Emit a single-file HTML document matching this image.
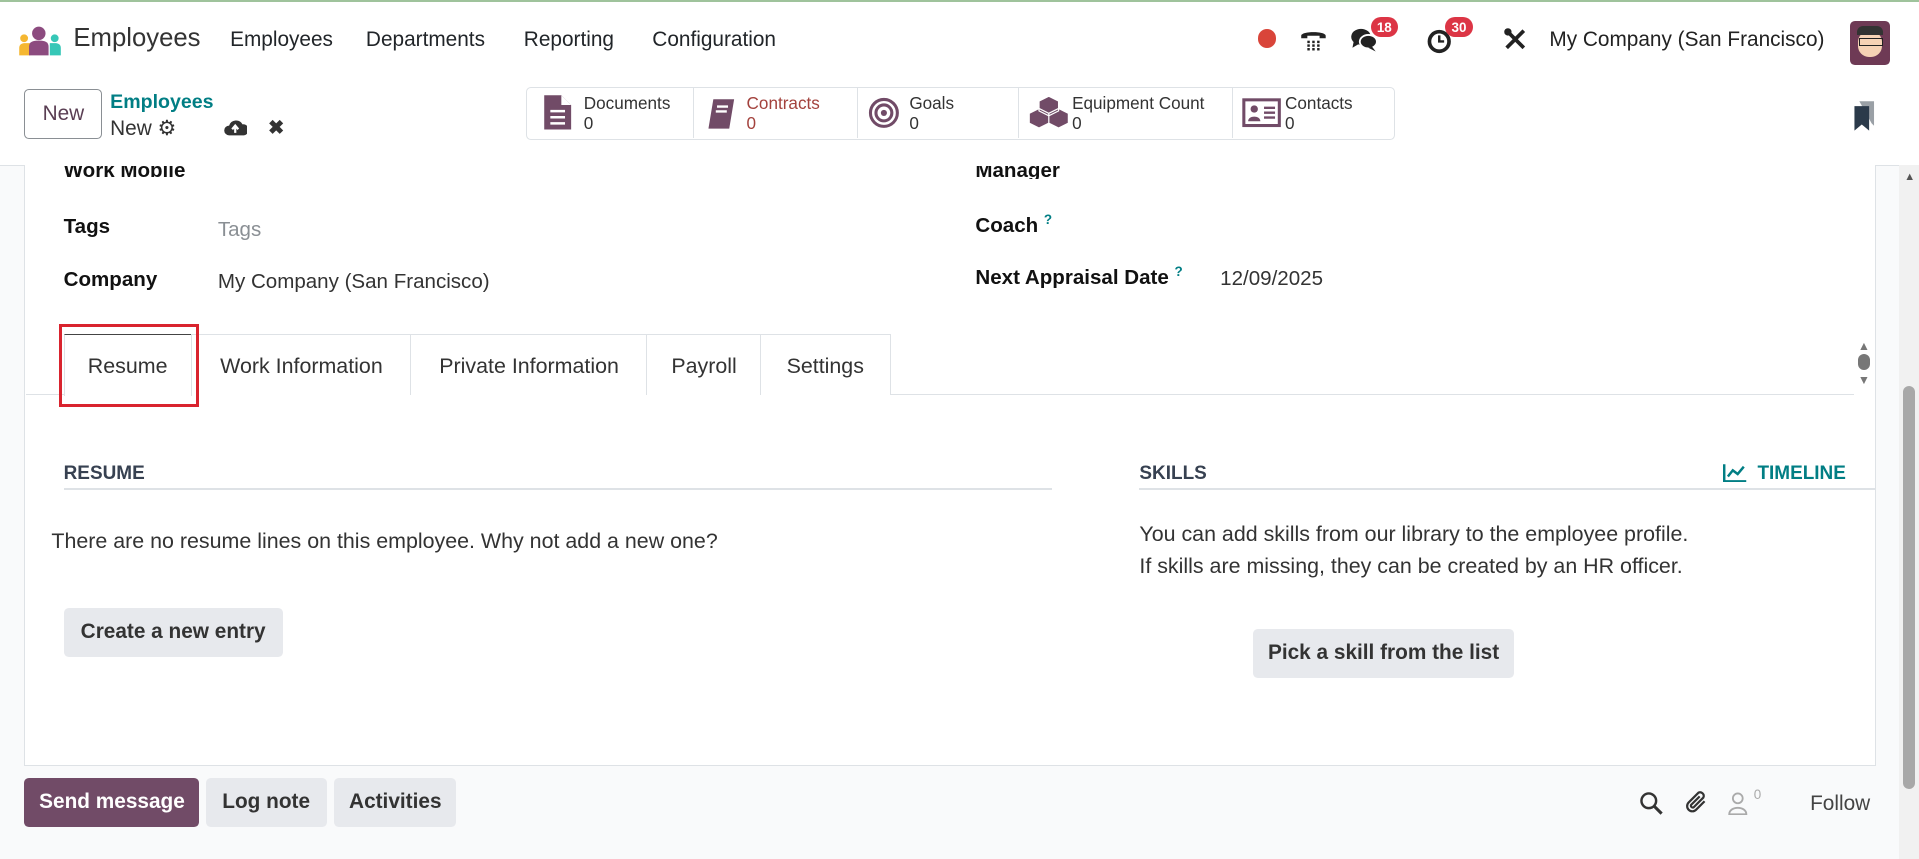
<!DOCTYPE html>
<html><head><meta charset="utf-8"><style>
html,body{margin:0;padding:0;}
html{width:1919px;height:859px;overflow:hidden;background:#f9fafb;}
body{zoom:1.22385;width:1568px;height:702px;position:relative;font-family:"Liberation Sans",sans-serif;color:#212529;background:#f9fafb;overflow:hidden;}
.a{position:absolute;white-space:nowrap;}
.top{position:absolute;left:0;top:0;width:1568px;height:2px;background:#9fc39c;}
.nav{position:absolute;left:0;top:2px;width:1568px;height:64px;background:#fff;}
.cp{position:absolute;left:0;top:66px;width:1568px;height:69px;background:#fff;border-bottom:1px solid #dee2e6;}
.sheet{position:absolute;left:20px;top:135px;width:1511px;height:490px;background:#fff;border:1px solid #dee2e6;border-top:none;}
.lbl{font-weight:bold;font-size:16.8px;color:#111;}
.val{font-size:16.8px;color:#333;}
.btn{position:absolute;background:#e7e9ed;border-radius:4px;font-size:17px;font-weight:bold;color:#333;text-align:center;}
.tab{position:absolute;top:273px;height:49px;border:1px solid #dee2e6;border-bottom:none;font-size:17.5px;color:#333;line-height:51px;text-align:center;background:#fff;}
.badge{position:absolute;background:#dc3545;color:#fff;font-size:11px;border-radius:9px;padding:2px 5px;font-weight:bold;}
.sb{position:absolute;top:71px;height:42px;border-left:1px solid #dee2e6;font-size:14px;color:#333;}
</style></head><body>
<div class="top"></div>
<div class="nav">
 <svg class="a" style="left:15px;top:19px" width="36" height="26" viewBox="0 0 36 26"><circle cx="17" cy="6" r="5.5" fill="#8c4b7f"/><circle cx="5" cy="10" r="3.2" fill="#f5b731"/><circle cx="30" cy="10" r="3.2" fill="#36c7b7"/><path d="M1 24v-6c0-3 2-4 5-4h4v10z" fill="#f5b731"/><path d="M26 24v-10h4c3 0 5 1 5 4v6z" fill="#36c7b7"/><path d="M9 24v-7c0-4 3-5 8-5s8 1 8 5v7z" fill="#8c4b7f"/></svg>
 <div class="a" style="left:60px;top:18px;font-size:21px;color:#333">Employees</div>
 <div class="a" style="left:188px;top:21px;font-size:17px">Employees</div>
 <div class="a" style="left:299px;top:21px;font-size:17px">Departments</div>
 <div class="a" style="left:428px;top:21px;font-size:17px">Reporting</div>
 <div class="a" style="left:533px;top:21px;font-size:17px">Configuration</div>
 <div class="a" style="left:1028px;top:22px;width:15px;height:15px;border-radius:50%;background:#d9453a"></div>
 <svg class="a" style="left:1062px;top:19px" width="22" height="22" viewBox="0 0 22 22"><path d="M1 8c0-4 20-4 20 0v2h-5V8H6v2H1z" fill="#222"/><g fill="#222"><rect x="6" y="12" width="2" height="2"/><rect x="10" y="12" width="2" height="2"/><rect x="14" y="12" width="2" height="2"/><rect x="6" y="15" width="2" height="2"/><rect x="10" y="15" width="2" height="2"/><rect x="14" y="15" width="2" height="2"/><rect x="6" y="18" width="2" height="2"/><rect x="10" y="18" width="2" height="2"/><rect x="14" y="18" width="2" height="2"/></g></svg>
 <svg class="a" style="left:1103px;top:20px" width="24" height="22" viewBox="0 0 24 22"><ellipse cx="9" cy="8" rx="8" ry="6.5" fill="#222"/><path d="M3 12l-1 5 5-3z" fill="#222"/><ellipse cx="15" cy="12" rx="7" ry="5.5" fill="#222" stroke="#fff" stroke-width="1.5"/><path d="M18 16l3 4-6-3z" fill="#222"/></svg>
 <div class="badge" style="left:1120px;top:12px">18</div>
 <svg class="a" style="left:1166px;top:21px" width="22" height="22" viewBox="0 0 22 22"><circle cx="10" cy="11" r="8" fill="none" stroke="#222" stroke-width="3"/><path d="M10 6v5h4" stroke="#222" stroke-width="2" fill="none"/></svg>
 <div class="badge" style="left:1181px;top:12px">30</div>
 <svg class="a" style="left:1228px;top:20px" width="20" height="20" viewBox="0 0 20 20"><path d="M3 3l14 14M17 3L3 17" stroke="#222" stroke-width="3"/><circle cx="4" cy="4" r="3" fill="#222"/></svg>
 <div class="a" style="left:1266px;top:21px;font-size:17px;color:#222">My Company (San Francisco)</div>
 <div class="a" style="left:1512px;top:15px;width:32px;height:36px;border-radius:4px;background:#6e3a55"><div style="position:absolute;left:6px;top:8px;width:20px;height:22px;border-radius:9px;background:#f6d2b5"></div><div style="position:absolute;left:5px;top:4px;width:22px;height:8px;border-radius:5px 5px 0 0;background:#333"></div><div style="position:absolute;left:7px;top:14px;width:18px;height:5px;border:1px solid #222"></div></div>
</div>
<div class="cp">
 <div class="a" style="left:20px;top:7px;width:62px;height:39px;border:1px solid #8a8f94;border-radius:4px;background:#fff;font-size:17px;line-height:39px;text-align:center;color:#5a3e53">New</div>
 <div class="a" style="left:90px;top:8px;font-size:16px;font-weight:bold;color:#017e84">Employees</div>
 <div class="a" style="left:90px;top:29px;font-size:17px;color:#333">New <span style="font-size:17px">⚙</span></div>
 <svg class="a" style="left:182px;top:30px" width="20" height="16" viewBox="0 0 20 16"><path d="M5 15a4 4 0 010-8 6 6 0 0111-1 4.5 4.5 0 011 9z" fill="#333"/><path d="M10 13V8M7.5 10l2.5-3 2.5 3" stroke="#fff" stroke-width="1.8" fill="none"/></svg>
 <div class="a" style="left:219px;top:29px;font-size:16px;font-weight:bold;color:#333">✖</div>
</div>
<div class="a" style="left:430px;top:71px;width:708px;height:42px;border:1px solid #dee2e6;border-radius:4px;background:#fff"></div>
<svg class="a" style="left:444px;top:77px" width="24" height="30" viewBox="0 0 24 30"><path d="M1 1h14l8 8v20H1z" fill="#714b67"/><path d="M15 1v8h8" fill="#fff"/><path d="M6 14h12M6 19h12M6 24h12" stroke="#fff" stroke-width="2"/></svg>
<div class="a" style="left:477px;top:77px;font-size:14px;color:#333;line-height:16px">Documents<br>0</div>
<div class="sb" style="left:566px"></div>
<svg class="a" style="left:577px;top:80px" width="24" height="26" viewBox="0 0 24 26"><path d="M6 1h17l-4 24H2z" fill="#714b67"/><path d="M9 7h9M8 11h9" stroke="#fff" stroke-width="2"/></svg>
<div class="a" style="left:610px;top:77px;font-size:14px;color:#a3423d;line-height:16px">Contracts<br>0</div>
<div class="sb" style="left:700px"></div>
<svg class="a" style="left:709px;top:79px" width="26" height="26" viewBox="0 0 26 26"><circle cx="13" cy="13" r="11" fill="none" stroke="#714b67" stroke-width="2.5"/><circle cx="13" cy="13" r="6.5" fill="none" stroke="#714b67" stroke-width="2.5"/><circle cx="13" cy="13" r="2.5" fill="#714b67"/></svg>
<div class="a" style="left:743px;top:77px;font-size:14px;color:#333;line-height:16px">Goals<br>0</div>
<div class="sb" style="left:832px"></div>
<svg class="a" style="left:840px;top:78px" width="34" height="28" viewBox="0 0 34 28"><path d="M17 1l8 4v8l-8 4-8-4V5z M1 15l8-4 8 4v8l-8 4-8-4z M17 15l8-4 8 4v8l-8 4-8-4z" fill="#714b67" stroke="#fff" stroke-width="1"/></svg>
<div class="a" style="left:876px;top:77px;font-size:14px;color:#333;line-height:16px">Equipment Count<br>0</div>
<div class="sb" style="left:1007px"></div>
<svg class="a" style="left:1015px;top:80px" width="32" height="26" viewBox="0 0 32 26"><rect x="1.5" y="1.5" width="29" height="21" fill="none" stroke="#714b67" stroke-width="2.5"/><circle cx="10" cy="9" r="3" fill="#714b67"/><path d="M5 19c0-5 10-5 10 0z" fill="#714b67"/><path d="M18 8h9M18 12h9M18 16h9" stroke="#714b67" stroke-width="2"/></svg>
<div class="a" style="left:1050px;top:77px;font-size:14px;color:#333;line-height:16px">Contacts<br>0</div>
<svg class="a" style="left:1513px;top:82px" width="20" height="26" viewBox="0 0 20 26"><path d="M6 1h12v20l-2-2z" fill="#9aa0a6"/><path d="M2 5h12v20l-6-5-6 5z" fill="#2b3a4a"/></svg>

<div class="sheet"></div>
<div style="position:absolute;left:21px;top:136px;width:1500px;height:10px;overflow:hidden"><div class="a lbl" style="left:31px;top:-6px">Work Mobile</div><div class="a lbl" style="left:776px;top:-6px">Manager</div></div>
<div class="a lbl" style="left:52px;top:176px">Tags</div>
<div class="a val" style="left:178px;top:178px;color:#8a8f94">Tags</div>
<div class="a lbl" style="left:52px;top:219px">Company</div>
<div class="a val" style="left:178px;top:221px">My Company (San Francisco)</div>
<div class="a lbl" style="left:797px;top:173px">Coach <sup style="color:#017e84;font-size:11px">?</sup></div>
<div class="a lbl" style="left:797px;top:216px">Next Appraisal Date <sup style="color:#017e84;font-size:11px">?</sup></div>
<div class="a val" style="left:997px;top:218px">12/09/2025</div>

<div class="a" style="left:21px;top:322px;width:1494px;height:1px;background:#dee2e6"></div>
<div class="tab" style="left:52px;width:103px;border-top:1px solid #444;height:50px">Resume</div>
<div class="tab" style="left:156px;width:179px">Work Information</div>
<div class="tab" style="left:335px;width:193px">Private Information</div>
<div class="tab" style="left:528px;width:93px">Payroll</div>
<div class="tab" style="left:621px;width:105px">Settings</div>
<div class="a" style="left:48px;top:265px;width:110px;height:63px;border:3px solid #d9232e"></div>
<div class="a" style="left:1518px;top:277px;font-size:10px;color:#777;line-height:12px;text-align:center">▲<br><span style="display:inline-block;width:10px;height:13px;border-radius:5px;background:#777"></span><br>▼</div>

<div class="a" style="left:52px;top:378px;font-size:15.5px;font-weight:bold;color:#374151">RESUME</div>
<div class="a" style="left:52px;top:399px;width:808px;height:1px;background:#dee2e6"></div>
<div class="a" style="left:42px;top:432px;font-size:17.5px;color:#333">There are no resume lines on this employee. Why not add a new one?</div>
<div class="btn" style="left:52px;top:497px;width:179px;height:40px;line-height:40px">Create a new entry</div>

<div class="a" style="left:931px;top:378px;font-size:15.5px;font-weight:bold;color:#374151">SKILLS</div>
<svg class="a" style="left:1408px;top:378px" width="20" height="16" viewBox="0 0 20 16"><path d="M1 1v14h18" stroke="#017e84" stroke-width="2" fill="none"/><path d="M4 11l4-5 4 3 5-6" stroke="#017e84" stroke-width="2" fill="none"/></svg>
<div class="a" style="left:1436px;top:378px;font-size:15.5px;font-weight:bold;color:#017e84">TIMELINE</div>
<div class="a" style="left:931px;top:399px;width:601px;height:1px;background:#dee2e6"></div>
<div class="a" style="left:931px;top:424px;font-size:17.5px;color:#333;line-height:26px">You can add skills from our library to the employee profile.<br>If skills are missing, they can be created by an HR officer.</div>
<div class="btn" style="left:1024px;top:514px;width:213px;height:40px;line-height:40px">Pick a skill from the list</div>

<div class="btn" style="left:20px;top:636px;width:143px;height:40px;line-height:40px;background:#714b67;color:#fff">Send message</div>
<div class="btn" style="left:168px;top:636px;width:99px;height:40px;line-height:40px">Log note</div>
<div class="btn" style="left:273px;top:636px;width:100px;height:40px;line-height:40px">Activities</div>
<svg class="a" style="left:1339px;top:646px" width="20" height="20" viewBox="0 0 20 20"><circle cx="8" cy="8" r="6" fill="none" stroke="#333" stroke-width="2"/><path d="M12.5 12.5l6 6" stroke="#333" stroke-width="2.5"/></svg>
<svg class="a" style="left:1377px;top:645px" width="20" height="22" viewBox="0 0 20 22"><path d="M16 10l-7 7a4 4 0 01-6-6l8-8a3 3 0 014 4l-8 8a1.5 1.5 0 01-2-2l7-7" stroke="#333" stroke-width="1.8" fill="none"/></svg>
<svg class="a" style="left:1412px;top:646px" width="16" height="20" viewBox="0 0 16 20"><circle cx="8" cy="6" r="4" fill="none" stroke="#aaa" stroke-width="1.5"/><path d="M1 19c0-7 14-7 14 0z" fill="none" stroke="#aaa" stroke-width="1.5"/></svg>
<div class="a" style="left:1433px;top:643px;font-size:11px;color:#aaa">0</div>
<div class="a" style="left:1479px;top:647px;font-size:17px;color:#444">Follow</div>

<div class="a" style="left:1552px;top:135px;width:16px;height:567px;background:#f1f1f1"></div>
<div class="a" style="left:1556px;top:140px;font-size:9px;color:#555">▲</div>
<div class="a" style="left:1555px;top:315px;width:10px;height:330px;border-radius:5px;background:#a8a8a8"></div>
</body></html>
